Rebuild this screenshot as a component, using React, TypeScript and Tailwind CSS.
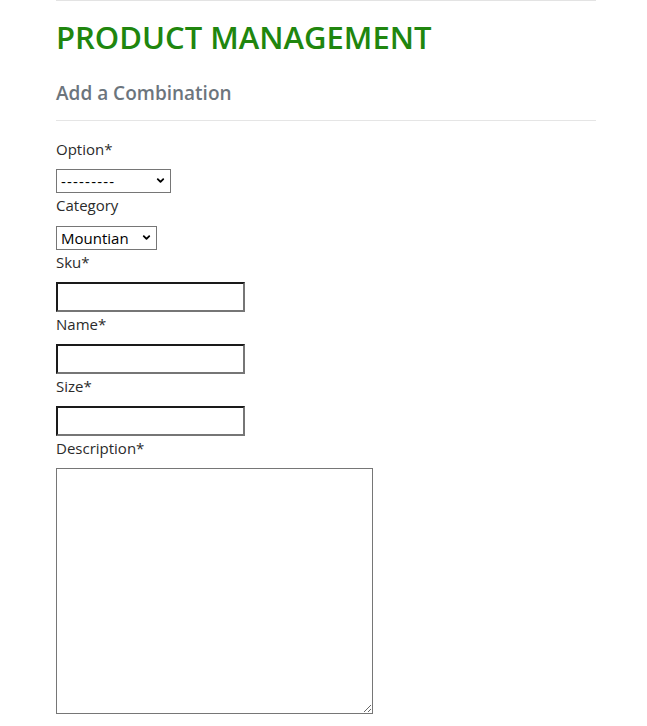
import { ChevronDown } from "lucide-react";

const textFields = ["Sku*", "Name*", "Size*"];

function Select({
  width,
  value,
  options,
  spaced,
}: {
  width: string;
  value: string;
  options: string[];
  spaced?: boolean;
}) {
  return (
    <div className={`relative ${width} h-[24px]`}>
      <select
        defaultValue={value}
        className={`appearance-none w-full h-full border border-[#767676] bg-white pl-[4px] pr-[20px] text-[15px] leading-none text-black outline-none ${
          spaced ? "tracking-[1.2px]" : ""
        }`}
      >
        {options.map((o) => (
          <option key={o}>{o}</option>
        ))}
      </select>
      <ChevronDown
        className="absolute right-[5px] top-[6px] pointer-events-none text-black"
        size={11}
        strokeWidth={4}
      />
    </div>
  );
}

export default function App() {
  return (
    <div className="min-h-screen bg-white font-['Open_Sans',sans-serif] text-[#2b2b2b]">
      <div className="mx-[56px] w-[540px] border-t border-[#e3e3e3]">
        <h1 className="mt-[18px] text-[31px] font-semibold leading-[1.2] text-[#20860e]">
          PRODUCT MANAGEMENT
        </h1>
        <h4 className="mt-[26px] pb-[15px] border-b border-[#e5e5e5] text-[19px] font-semibold leading-[1.2] text-[#6c757d]">
          Add a Combination
        </h4>

        <form className="pt-[16px]">
          <label className="block text-[15px] leading-[24px] mb-[8px]">Option*</label>
          <Select width="w-[115px]" value="---------" options={["---------", "Colour", "Frame"]} spaced />

          <label className="block text-[15px] leading-[24px] mb-[9px]">Category</label>
          <Select width="w-[101px]" value="Mountian" options={["Mountian", "Road", "Hybrid"]} />

          {textFields.map((f) => (
            <div key={f}>
              <label className="block text-[15px] leading-[24px] mb-[8px]">{f}</label>
              <input
                type="text"
                className="block w-[189px] h-[30px] border-2 border-t-[#1a1a1a] border-l-[#1a1a1a] border-b-[#767676] border-r-[#767676] bg-white px-[2px] outline-none"
              />
            </div>
          ))}

          <label className="block text-[15px] leading-[24px] mb-[8px]">Description*</label>
          <textarea className="block w-[317px] h-[246px] border border-[#767676] bg-white p-[2px] outline-none" />
        </form>
      </div>
    </div>
  );
}
